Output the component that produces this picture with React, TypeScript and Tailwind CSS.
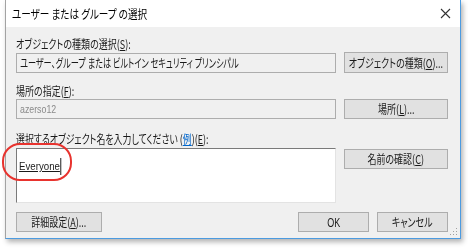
import React from "react";

const jp = { fontFamily: '"Noto Sans CJK JP", "Noto Sans", sans-serif', fontFeatureSettings: '"palt"' };
const latin = { fontFamily: '"Liberation Sans", "Noto Sans", sans-serif' };

// Meiryo UI is much narrower than Noto Sans CJK, so squeeze text horizontally
const T: React.FC<{ center?: boolean; sx?: string; children: React.ReactNode }> = ({ center, sx = "scale-x-[0.75]", children }) => (
  <span className={`inline-block whitespace-nowrap ${sx} ${center ? "origin-center" : "origin-left"}`}>
    {children}
  </span>
);

const Btn: React.FC<{ className?: string; children: React.ReactNode }> = ({ className = "", children }) => (
  <div
    className={`flex items-center justify-center h-[20px] bg-[#e1e1e1] border border-[#adadad] text-[12px] leading-none text-[#1a1a1a] ${className}`}
  >
    <T center>{children}</T>
  </div>
);

const Label: React.FC<{ className?: string; sx?: string; children: React.ReactNode }> = ({ className = "", sx, children }) => (
  <div className={`h-[14px] leading-[14px] text-[12px] text-[#1a1a1a] ${className}`}>
    <T sx={sx}>{children}</T>
  </div>
);

export default function App() {
  return (
    <div className="relative w-[468px] h-[248px] bg-white overflow-hidden" style={jp}>
      <div className="relative ml-[5px] w-[456px] h-[239px] border-l border-l-[#a3a3a3] border-r border-r-[#4c9be0] border-b border-b-[#4c9be0] shadow-[2px_3px_5px_rgba(0,0,0,0.3)] flex flex-col">
        {/* title bar */}
        <div className="h-[27px] bg-white flex items-center justify-between pl-[6px] pr-[9px]">
          <span className="text-[12px] text-black leading-none">
            <T sx="scale-x-[0.8]">ユーザー または グループ の選択</T>
          </span>
          <svg width="11" height="11" viewBox="0 0 11 11">
            <path d="M1 1 L10 10 M10 1 L1 10" stroke="#333" strokeWidth="1.1" />
          </svg>
        </div>

        {/* body */}
        <div className="flex-1 bg-[#f0f0f0] pl-[10px] flex flex-col">
          <Label className="mt-[10px]">
            オブジェクトの種類の選択(<u>S</u>):
          </Label>
          <div className="flex items-start mt-[1px] gap-[8px]">
            <div className="w-[320px] h-[20px] mt-[1px] border border-[#adadad] bg-[#f0f0f0] flex items-center pl-[3px] text-[12px] text-[#1a1a1a] overflow-hidden">
              <T sx="scale-x-[0.68]">ユーザー、グループ または ビルトイン セキュリティ プリンシパル</T>
            </div>
            <Btn className="w-[104px] h-[21px]">
              オブジェクトの種類(<u>O</u>)...
            </Btn>
          </div>

          <Label className="mt-[11px]">
            場所の指定(<u>F</u>):
          </Label>
          <div className="flex items-start mt-[1px] gap-[8px]">
            <div className="w-[320px] h-[20px] border border-[#adadad] bg-[#f0f0f0] flex items-center pl-[3px]">
              <span className="text-[11px] text-[#8a8a8a] blur-[0.5px] inline-block origin-left scale-x-[0.8]" style={latin}>
                azerso12
              </span>
            </div>
            <Btn className="w-[104px]">
              場所(<u>L</u>)...
            </Btn>
          </div>

          <Label className="mt-[13px]" sx="scale-x-[0.74]">
            選択するオブジェクト名を入力してください (<u className="text-[#0066cc]">例</u>)(<u>E</u>):
          </Label>
          <div className="flex items-start mt-[2px] gap-[8px]">
            <div className="w-[320px] h-[55px] bg-white border border-[#7a7a7a] border-r-[#e3e3e3] border-b-[#e3e3e3] pl-[2px] pt-[2px]">
              <span className="inline-block origin-left scale-x-[0.88] text-[11px] text-[#1a1a1a] underline border-r border-black pr-[1px]" style={latin}>
                Everyone
              </span>
            </div>
            <Btn className="w-[104px] mt-[1px]">
              名前の確認(<u>C</u>)
            </Btn>
          </div>

          <div className="flex items-start mt-[9px] pr-[12px]">
            <Btn className="w-[86px]">
              詳細設定(<u>A</u>)...
            </Btn>
            <Btn className="w-[71px] ml-auto">
              <span style={latin}>OK</span>
            </Btn>
            <Btn className="w-[71px] ml-[8px]">キャンセル</Btn>
          </div>
        </div>

        {/* resize grip */}
        <svg className="absolute right-[2px] bottom-[2px]" width="8" height="8" viewBox="0 0 8 8">
          <rect x="6" y="0" width="1" height="1" fill="#a0a0a0" />
          <rect x="3" y="3" width="1" height="1" fill="#a0a0a0" />
          <rect x="6" y="3" width="1" height="1" fill="#a0a0a0" />
          <rect x="0" y="6" width="1" height="1" fill="#a0a0a0" />
          <rect x="3" y="6" width="1" height="1" fill="#a0a0a0" />
          <rect x="6" y="6" width="1" height="1" fill="#a0a0a0" />
        </svg>
      </div>

      {/* red annotation */}
      <div className="absolute left-[2px] top-[143px] w-[70px] h-[38px] border-[2.5px] border-[#e8332e] rounded-[18px]" />
    </div>
  );
}
